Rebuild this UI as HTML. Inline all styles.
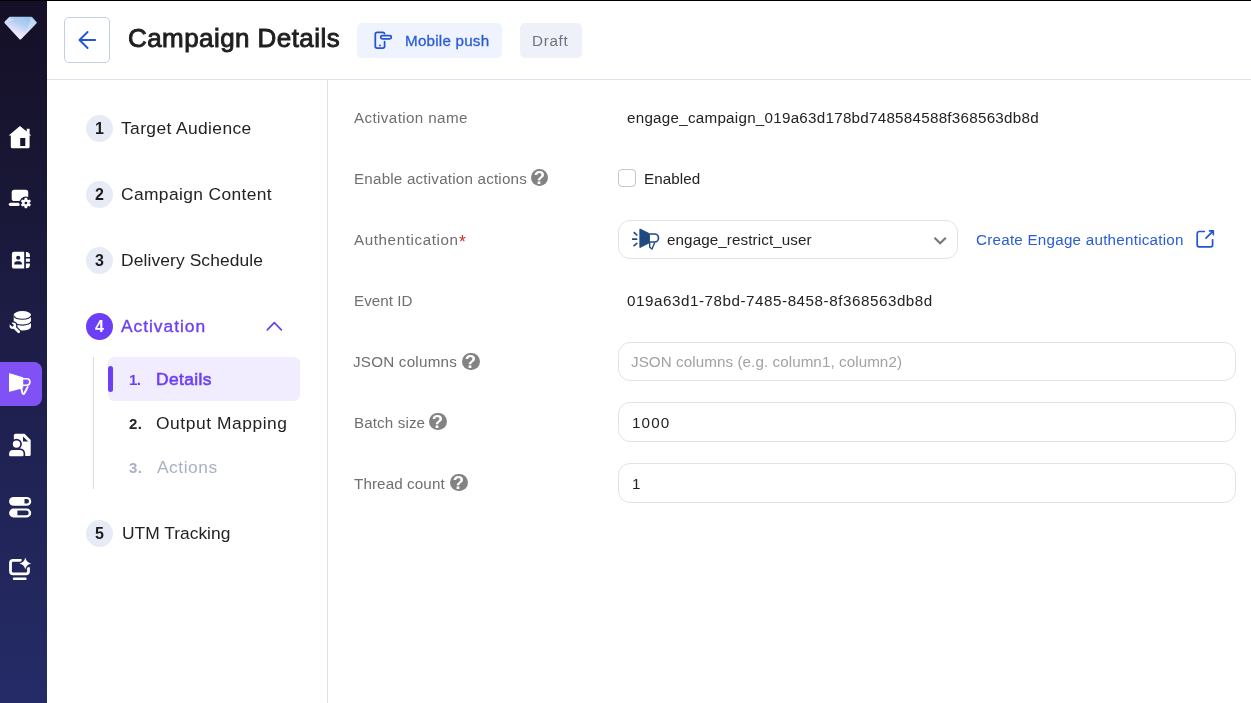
<!DOCTYPE html>
<html lang="en">
<head>
<meta charset="utf-8">
<title>Campaign Details</title>
<style>
*{box-sizing:border-box;margin:0;padding:0}
html,body{width:1251px;height:703px;overflow:hidden;background:#fff}
body{position:relative;font-family:"Liberation Sans",sans-serif;color:#232323}
.abs{position:absolute}
.t{position:absolute;white-space:pre;line-height:24px;height:24px;will-change:transform}
#nav{left:0;top:0;width:47px;height:703px;background:linear-gradient(180deg,#151027 0%,#181531 20%,#1d1d47 48%,#212457 72%,#242b67 100%)}
#navsvg{position:absolute;left:0;top:0}
#topline{left:0;top:0;width:1251px;height:1px;background:#000}
#hdrline{left:47px;top:79px;width:1204px;height:1px;background:#dfe2ee}
#vline{left:327px;top:80px;width:1px;height:623px;background:#dfe0ee}
#back{left:64px;top:17px;width:46px;height:46px;border:1px solid #c4cee1;border-radius:5px;background:#fff}
.badge{position:absolute;top:23px;height:35px;border-radius:5px}
#b1{left:357px;width:145px;background:#eff3fd}
#b2{left:520px;width:62px;background:#eff1f8}
.circ{position:absolute;left:86px;width:27px;height:27px;border-radius:50%;background:#e6ebf5}
.circ.on{background:#6c3ff6}
.cn{will-change:transform;position:absolute;width:27px;left:86px;text-align:center;font-size:15px;font-weight:700;line-height:1;color:#1d1d1f}
.inp{position:absolute;left:618px;width:618px;border:1px solid #e3e3e3;border-radius:12px;background:#fff}
.qc{position:absolute;width:17.3px;height:17.3px;border-radius:50%;background:#838383}
.q{will-change:transform;position:absolute;width:17px;height:17px;color:#fff;font-weight:700;font-size:18.5px;line-height:17px;text-align:center}
svg{overflow:visible}
</style>
</head>
<body>
<div id="nav" class="abs"></div>
<svg id="navsvg" width="47" height="703" viewBox="0 0 47 703">
  <defs>
    <linearGradient id="lg" x1="0.95" y1="0" x2="0.3" y2="1">
      <stop offset="0" stop-color="#94c1ee"/><stop offset="0.4" stop-color="#b4cef0"/><stop offset="0.8" stop-color="#ece8fd"/><stop offset="1" stop-color="#f8f0ff"/>
    </linearGradient>
  </defs>
  <!-- logo -->
  <path d="M9.8 18H31.5L35.6 22.7L20.2 38.3L5.6 22.4Z" fill="url(#lg)" stroke="url(#lg)" stroke-width="2.4" stroke-linejoin="round"/>
  <path d="M30.8 17.2L36.6 22.7L24.8 34.8Q28.4 27 29.8 22.2Z" fill="#ffffff" opacity="0.32"/>
  <path d="M4.6 22.6L9 17.6L14 20Z" fill="#ffffff" opacity="0.3"/>
  <!-- selected bg -->
  <rect x="-8" y="362" width="50" height="44" rx="8" fill="#8052f5"/>
  <!-- home -->
  <path fill="#fff" fill-rule="evenodd" d="M19.95 125.9L8.7 135.5H10.8V146.7a1.5 1.5 0 0 0 1.5 1.5H28.1a1.5 1.5 0 0 0 1.5-1.5V135.5H31.3L29.6 134V128.8H26.7V131.6ZM20.2 137.9H25.3V145.9H20.2Z"/>
  <!-- laptop gear -->
  <rect x="11.7" y="189.7" width="16.5" height="11.3" rx="2.6" fill="#fff"/>
  <rect x="8.8" y="202.8" width="11.1" height="3.1" rx="1.55" fill="#fff"/>
  <circle cx="25.9" cy="203" r="6.5" fill="#1b193d"/>
  <g fill="#fff" transform="translate(25.9 203)">
    <circle r="3.7"/>
    <rect x="-1.35" y="-5.2" width="2.7" height="10.4" rx="0.8"/>
    <rect x="-1.35" y="-5.2" width="2.7" height="10.4" rx="0.8" transform="rotate(60)"/>
    <rect x="-1.35" y="-5.2" width="2.7" height="10.4" rx="0.8" transform="rotate(120)"/>
    <circle r="1.35" fill="#1b193d"/>
  </g>
  <!-- contacts -->
  <path fill="#fff" d="M14.1 251.8H24.2V268.6H14.1a2.2 2.2 0 0 1-2.2-2.2V254a2.2 2.2 0 0 1 2.2-2.2Z"/>
  <path fill="#fff" d="M25.9 252.1H26.3a3.6 3.6 0 0 1 3.6 3.6V256.9H25.9ZM25.9 258.6H29.9V261.8H25.9ZM25.9 263.5H29.9V264.7a3.6 3.6 0 0 1-3.6 3.6H25.9Z"/>
  <circle cx="18.2" cy="257.7" r="2.05" fill="#1c1b43"/>
  <path fill="#1c1b43" d="M14.2 264.6V264.2a3 3 0 0 1 3-3H19a3 3 0 0 1 3 3V264.6Z"/>
  <!-- database wrench -->
  <path fill="#fff" d="M13.7 314.8a8.65 3.7 0 0 1 17.3 0V326.8a8.65 3.7 0 0 1-17.3 0Z"/>
  <path fill="none" stroke="#1e1f49" stroke-width="1.1" d="M13.7 315.6a8.65 3.7 0 0 0 17.3 0M13.7 321.4a8.65 3.7 0 0 0 17.3 0"/>
  <g fill="none" stroke-linecap="round">
    <path stroke="#1e1f49" stroke-width="5" d="M14.6 327.7L18.7 331.8"/>
    <circle cx="12.9" cy="325.8" r="4.6" fill="#1e1f49" stroke="none"/>
    <path stroke="#fff" stroke-width="2.7" d="M14.6 327.7L18.7 331.8"/>
    <circle cx="12.9" cy="325.8" r="3.3" fill="#fff" stroke="none"/>
    <path stroke="#1e1f49" stroke-width="2.4" stroke-linecap="butt" d="M13.1 326L9.9 322.8"/>
  </g>
  <!-- megaphone -->
  <path fill="#fff" stroke="#fff" stroke-width="1.2" stroke-linejoin="round" d="M9.6 373.8L22.6 377.8V387.6L9.6 391.2Z"/>
  <path fill="none" stroke="#fff" stroke-width="1.6" d="M22.6 378.8H26.7a3.2 3.2 0 0 1 0 6.4H22.6"/>
  <path fill="none" stroke="#fff" stroke-width="1.9" stroke-linejoin="round" stroke-linecap="round" d="M21 387.4L22.5 393.2Q23.3 394.8 24.4 393.2L27.6 387"/>
  <!-- person doc -->
  <path fill="#fff" d="M15.4 433.8H24.5L30.7 440.1V454.5a1.5 1.5 0 0 1-1.5 1.5H15.4a1.5 1.5 0 0 1-1.5-1.5V435.3a1.5 1.5 0 0 1 1.5-1.5Z"/>
  <path fill="#20225a" d="M23 436.4V441.5H28.2Z"/>
  <circle cx="16.5" cy="444.1" r="5.4" fill="#20225a"/>
  <path fill="#20225a" d="M7.5 457.7V453.6a5.4 5.4 0 0 1 5.4-5.4H19.8a5.4 5.4 0 0 1 5.4 5.4V457.7Z"/>
  <circle cx="16.5" cy="444.1" r="3.7" fill="#fff"/>
  <path fill="#fff" d="M9.1 455V454a4 4 0 0 1 4-4H19.6a4 4 0 0 1 4 4V455a1.3 1.3 0 0 1-1.3 1.3H10.4a1.3 1.3 0 0 1-1.3-1.3Z"/>
  <!-- toggles -->
  <rect x="9.1" y="497" width="22.1" height="8.8" rx="4.4" fill="#fff"/>
  <path fill="#222559" d="M24.5 499H26.8a2.25 2.25 0 0 1 0 4.5H24.5Z"/>
  <rect x="9.1" y="508.6" width="22.1" height="8.8" rx="4.4" fill="#fff"/>
  <path fill="#222559" d="M17.4 510.6H26.4a2.3 2.3 0 0 1 0 4.6H17.4Z"/>
  <!-- monitor sparkle -->
  <path d="M21.6 560.4H13.1a2.6 2.6 0 0 0-2.6 2.6V571.2a2.6 2.6 0 0 0 2.6 2.6H25.9a2.6 2.6 0 0 0 2.6-2.6V567.3" fill="none" stroke="#fff" stroke-width="2.8"/>
  <rect x="12.8" y="577.5" width="13.9" height="2.6" rx="1.3" fill="#fff"/>
  <path id="spk" fill="#fff" stroke="#23285f" stroke-width="2.6" paint-order="stroke" stroke-linejoin="round" d="M25.3 557.6Q26.3 562.5 31.2 563.5Q26.3 564.5 25.3 569.4Q24.3 564.5 19.4 563.5Q24.3 562.5 25.3 557.6Z"/>
</svg>
<div id="topline" class="abs"></div>
<div id="hdrline" class="abs"></div>
<div id="vline" class="abs"></div>

<!-- header -->
<div id="back" class="abs"></div>
<svg class="abs" style="left:64px;top:17px" width="46" height="46" viewBox="64 17 46 46"><path d="M95.2 40H79.6M87.6 32L79.5 40L87.6 48" fill="none" stroke="#2254d6" stroke-width="1.9" stroke-linecap="round" stroke-linejoin="round"/></svg>
<div id="b1" class="badge"></div>
<svg class="abs" style="left:370px;top:28px" width="28" height="24" viewBox="370 28 28 24"><g fill="none" stroke="#2254d6" stroke-width="1.75" stroke-linecap="round"><path d="M384.6 33.7a1.8 1.8 0 0 0-1.8-1.4H377.1a1.8 1.8 0 0 0-1.8 1.8V46.2a1.8 1.8 0 0 0 1.8 1.8H382.8a1.8 1.8 0 0 0 1.8-1.8V41.5"/><rect x="380.7" y="35.7" width="10.6" height="3.1" rx="1.55"/></g><circle cx="379.9" cy="45.5" r="0.95" fill="#2254d6"/></svg>
<div id="b2" class="badge"></div>

<!-- steps -->
<div class="circ" style="top:115px"></div>
<div class="circ" style="top:181px"></div>
<div class="circ" style="top:247px"></div>
<div class="circ on" style="top:313px"></div>
<div class="circ" style="top:519.5px"></div>
<svg class="abs" style="left:262px;top:316px" width="24" height="20" viewBox="262 316 24 20"><path d="M267.3 329.8L274.3 322.6L281.3 329.8" fill="none" stroke="#6c3ff6" stroke-width="1.7" stroke-linecap="round" stroke-linejoin="round"/></svg>

<div class="abs" style="left:93px;top:357px;width:1px;height:132px;background:#dcdceb"></div>
<div class="abs" style="left:108px;top:357px;width:192px;height:44px;background:#f1ecfe;border-radius:6px"></div>
<div class="abs" style="left:108px;top:366px;width:5px;height:26px;background:#6c3ff6;border-radius:2.5px"></div>

<!-- form static -->
<div class="qc" style="left:531.1px;top:169.2px"></div><div class="q" style="left:531px;top:169px">?</div>
<div class="abs" style="left:618px;top:169px;width:18px;height:18px;border:1px solid #c6c6c6;border-radius:4px;background:#fff"></div>
<div class="t" style="left:459px;top:230px;font-size:17.5px;color:#c8302a">*</div>
<div class="inp" style="top:220px;width:340px;height:39px"></div>
<svg class="abs" style="left:628px;top:224px" width="36" height="30" viewBox="628 224 36 30">
  <path fill="#1f4a80" stroke="#1f4a80" stroke-width="1" stroke-linejoin="round" d="M639.9 229L649.4 233.7V242.8L639.9 247.5Z"/>
  <g fill="none" stroke="#1f4a80" stroke-linecap="round" stroke-linejoin="round">
    <path stroke-width="1.65" stroke-linecap="butt" d="M649.4 234H654.5a4 4 0 0 1 0 8H649.4"/>
    <path stroke-width="1.4" d="M649.7 243V247.3L652 249L654.5 243"/>
    <path stroke-width="1.7" d="M634.3 232.6L636.8 235M632.7 239.2H636.6M634.1 245.6L636.8 243.4"/>
  </g>
</svg>
<svg class="abs" style="left:930px;top:232px" width="20" height="16" viewBox="930 232 20 16"><path d="M934.5 237.7L940.15 243.2L945.8 237.7" fill="none" stroke="#797979" stroke-width="2.2" stroke-linecap="butt" stroke-linejoin="miter"/></svg>
<svg class="abs" style="left:1194px;top:228px" width="22" height="22" viewBox="1194 228 22 22"><g fill="none" stroke="#2254d6" stroke-width="1.7" stroke-linecap="round" stroke-linejoin="round"><path d="M1204.3 231.5H1199.1a1.9 1.9 0 0 0-1.9 1.9V245a1.9 1.9 0 0 0 1.9 1.9H1210.7a1.9 1.9 0 0 0 1.9-1.9V239.8"/><path d="M1206 238.2L1213 231.2M1209.6 230.9H1213.3V234.6"/></g></svg>

<div class="inp" style="top:342px;height:39px"></div>
<div class="qc" style="left:462.3px;top:352.8px"></div><div class="q" style="left:462px;top:353px">?</div>
<div class="inp" style="top:402px;height:40px"></div>
<div class="qc" style="left:429.3px;top:413.0px"></div><div class="q" style="left:429px;top:413px">?</div>
<div class="inp" style="top:463px;height:40px"></div>
<div class="qc" style="left:450.3px;top:474.2px"></div><div class="q" style="left:450px;top:474px">?</div>

<div class="t" id="title" style="left:127.78px;top:26px;font-size:26px;font-weight:400;letter-spacing:0.428px;color:#1f1f21;-webkit-text-stroke:0.9px #1f1f21">Campaign Details</div>
<div class="t" id="mp" style="left:405.40px;top:29px;font-size:15.2px;font-weight:400;letter-spacing:0.224px;color:#2a5cd8;-webkit-text-stroke:0.3px #2a5cd8">Mobile push</div>
<div class="t" id="draft" style="left:532.43px;top:29px;font-size:15.2px;font-weight:400;letter-spacing:0.687px;color:#6d7384;">Draft</div>
<div class="t" id="s1" style="left:121.38px;top:116px;font-size:17.4px;font-weight:400;letter-spacing:0.395px;color:#232323;">Target Audience</div>
<div class="t" id="s2" style="left:121.00px;top:182px;font-size:17.4px;font-weight:400;letter-spacing:0.378px;color:#232323;">Campaign Content</div>
<div class="t" id="s3" style="left:121.26px;top:248px;font-size:17.4px;font-weight:400;letter-spacing:0.112px;color:#232323;">Delivery Schedule</div>
<div class="t" id="s4" style="left:121.47px;top:314px;font-size:17.4px;font-weight:400;letter-spacing:0.963px;color:#6c3ff6;-webkit-text-stroke:0.35px #6c3ff6">Activation</div>
<div class="t" id="s5" style="left:121.56px;top:521px;font-size:17.4px;font-weight:400;letter-spacing:0.011px;color:#232323;">UTM Tracking</div>
<div class="t" id="n1" style="left:129.00px;top:368px;font-size:15px;font-weight:700;letter-spacing:-0.541px;color:#6c3ff6;">1.</div>
<div class="t" id="d1" style="left:156.39px;top:367px;font-size:17.4px;font-weight:400;letter-spacing:0.398px;color:#6c3ff6;-webkit-text-stroke:0.6px #6c3ff6">Details</div>
<div class="t" id="n2" style="left:128.90px;top:412px;font-size:15px;font-weight:700;letter-spacing:0.447px;color:#232323;">2.</div>
<div class="t" id="d2" style="left:156.49px;top:411px;font-size:17.4px;font-weight:400;letter-spacing:0.559px;color:#232323;">Output Mapping</div>
<div class="t" id="n3" style="left:128.68px;top:456px;font-size:15px;font-weight:700;letter-spacing:0.396px;color:#a9b0c4;">3.</div>
<div class="t" id="d3" style="left:156.96px;top:455px;font-size:17.4px;font-weight:400;letter-spacing:0.507px;color:#a9b0c4;">Actions</div>
<div class="t" id="l1" style="left:353.93px;top:106px;font-size:15.2px;font-weight:400;letter-spacing:0.383px;color:#6f6f6f;">Activation name</div>
<div class="t" id="v1" style="left:627.18px;top:106px;font-size:15.2px;font-weight:400;letter-spacing:0.258px;color:#232323;">engage_campaign_019a63d178bd748584588f368563db8d</div>
<div class="t" id="l2" style="left:353.93px;top:167px;font-size:15.2px;font-weight:400;letter-spacing:0.201px;color:#6f6f6f;">Enable activation actions</div>
<div class="t" id="v2" style="left:644.43px;top:167px;font-size:15.2px;font-weight:400;letter-spacing:0.075px;color:#232323;">Enabled</div>
<div class="t" id="l3" style="left:353.93px;top:228px;font-size:15.2px;font-weight:400;letter-spacing:0.592px;color:#6f6f6f;">Authentication</div>
<div class="t" id="v3" style="left:667.18px;top:228px;font-size:15.2px;font-weight:400;letter-spacing:0.104px;color:#232323;">engage_restrict_user</div>
<div class="t" id="lk" style="left:975.75px;top:228px;font-size:15.2px;font-weight:400;letter-spacing:0.242px;color:#2a5cd8;">Create Engage authentication</div>
<div class="t" id="l4" style="left:353.93px;top:289px;font-size:15.2px;font-weight:400;letter-spacing:0.043px;color:#6f6f6f;">Event ID</div>
<div class="t" id="v4" style="left:626.91px;top:289px;font-size:15.2px;font-weight:400;letter-spacing:0.543px;color:#232323;">019a63d1-78bd-7485-8458-8f368563db8d</div>
<div class="t" id="l5" style="left:353.41px;top:350px;font-size:15.2px;font-weight:400;letter-spacing:0.227px;color:#6f6f6f;">JSON columns</div>
<div class="t" id="v5" style="left:631.41px;top:350px;font-size:15.2px;font-weight:400;letter-spacing:0.073px;color:#a2a2a2;">JSON columns (e.g. column1, column2)</div>
<div class="t" id="l6" style="left:353.93px;top:411px;font-size:15.2px;font-weight:400;letter-spacing:0.107px;color:#6f6f6f;">Batch size</div>
<div class="t" id="v6" style="left:631.79px;top:411px;font-size:15.2px;font-weight:400;letter-spacing:1.119px;color:#232323;">1000</div>
<div class="t" id="l7" style="left:353.56px;top:472px;font-size:15.2px;font-weight:400;letter-spacing:0.108px;color:#6f6f6f;">Thread count</div>
<div class="t" id="v7" style="left:631.79px;top:472px;font-size:15.2px;font-weight:400;letter-spacing:0.000px;color:#232323;">1</div>
<div class="t" id="c1" style="left:95.07px;top:117px;font-size:16px;font-weight:700;letter-spacing:0.000px;color:#1d1d1f;">1</div>
<div class="t" id="c2" style="left:95.34px;top:183px;font-size:16px;font-weight:700;letter-spacing:0.000px;color:#1d1d1f;">2</div>
<div class="t" id="c3" style="left:95.29px;top:249px;font-size:16px;font-weight:700;letter-spacing:0.000px;color:#1d1d1f;">3</div>
<div class="t" id="c4" style="left:94.88px;top:315px;font-size:16px;font-weight:700;letter-spacing:0.000px;color:#ffffff;">4</div>
<div class="t" id="c5" style="left:94.92px;top:522px;font-size:16px;font-weight:700;letter-spacing:0.000px;color:#1d1d1f;">5</div>
</body>
</html>
